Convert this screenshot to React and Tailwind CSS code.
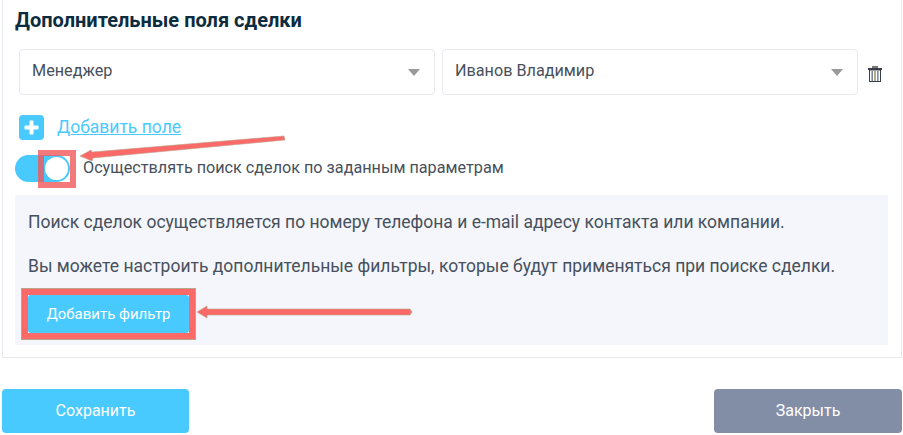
import React from "react";

const Caret = () => (
  <span className="w-0 h-0 border-x-[6px] border-x-transparent border-t-[7px] border-t-[#9a9a9a]"></span>
);

const Select = ({ label }) => (
  <div className="flex-1 h-[46px] flex items-center justify-between pl-[12px] pr-[14px] border border-[#e9e9f0] rounded-[4px] text-[16.2px] text-[#47505c]">
    <span className="-mt-[2px]">{label}</span>
    <Caret />
  </div>
);

const Trash = () => (
  <svg width="14" height="16" viewBox="0 0 14 16" className="shrink-0">
    <rect x="4" y="0" width="6" height="2" fill="#777" />
    <rect x="0" y="2" width="14" height="2" fill="#3a3f47" />
    <rect x="1.5" y="4" width="11" height="11.5" fill="#fff" stroke="#3a3f47" strokeWidth="1" />
    <rect x="3.4" y="5" width="1.6" height="10" fill="#7a8794" />
    <rect x="6.2" y="5" width="1.6" height="10" fill="#a09a70" />
    <rect x="9" y="5" width="1.6" height="10" fill="#7a8fa6" />
  </svg>
);

const App = () => {
  return (
    <div className="relative w-[903px] h-[435px] bg-white overflow-hidden font-['Roboto',sans-serif]">
      {/* Card */}
      <div className="ml-[2px] mr-px h-[358px] border-x border-b border-[#e8e9f0] pl-[12px] pr-[13px] pt-[9px]">
        <h2 className="text-[20px] leading-[22px] font-bold text-[#0d2c3e]">
          Дополнительные поля сделки
        </h2>

        <div className="flex items-center mt-[18px] ml-[4px]">
          <div className="flex gap-[7px] w-[839px]">
            <Select label="Менеджер" />
            <Select label="Иванов Владимир" />
          </div>
          <span className="ml-[10px] mt-[4px]">
            <Trash />
          </span>
        </div>

        <div className="flex items-center mt-[20px] ml-[4px]">
          <span className="w-[25px] h-[25px] rounded-[4px] bg-[#49caff] flex items-center justify-center">
            <svg width="15" height="15" viewBox="0 0 15 15">
              <path
                d="M5.5 1.5a1 1 0 0 1 1-1h2a1 1 0 0 1 1 1v4h4a1 1 0 0 1 1 1v2a1 1 0 0 1-1 1h-4v4a1 1 0 0 1-1 1h-2a1 1 0 0 1-1-1v-4h-4a1 1 0 0 1-1-1v-2a1 1 0 0 1 1-1h4z"
                fill="#fff"
              />
            </svg>
          </span>
          <a className="ml-[13px] text-[17.5px] leading-[25px] text-[#49caff] underline">
            Добавить поле
          </a>
        </div>

        <div className="flex items-center mt-[15px] h-[27px]">
          <div className="relative w-[55px] h-[27px] rounded-full bg-[#49caff]">
            <span className="absolute right-[2px] top-[2px] w-[23px] h-[23px] rounded-full bg-white"></span>
          </div>
          <span className="ml-[13px] text-[16.2px] text-[#47505c]">
            Осуществлять поиск сделок по заданным параметрам
          </span>
        </div>

        <div className="mt-[13px] h-[150px] bg-[#f4f6fb] pl-[7px] pt-[16px] text-[17.5px] leading-[22px] text-[#47505c]">
          <p className="pl-[6px]">
            Поиск сделок осуществляется по номеру телефона и e-mail адресу контакта или компании.
          </p>
          <p className="pl-[6px] mt-[22px]">
            Вы можете настроить дополнительные фильтры, которые будут применяться при поиске сделки.
          </p>
          <div className="mt-[12px] w-[173px] h-[50px] border-[6px] border-[#fb6a68] outline outline-[#b9a58c]">
            <button className="block w-full h-full rounded-[3px] bg-[#49caff] text-white text-[15px]">
              Добавить фильтр
            </button>
          </div>
        </div>
      </div>

      {/* Footer buttons */}
      <div className="flex justify-between mt-[31px] ml-[2px] mr-px">
        <button className="w-[187px] h-[44px] rounded-[4px] bg-[#49caff] text-white text-[16px]">
          Сохранить
        </button>
        <button className="w-[188px] h-[44px] rounded-[4px] bg-[#828da6] text-white text-[16px]">
          Закрыть
        </button>
      </div>

      {/* Screenshot annotations */}
      <div className="absolute left-[38px] top-[150px] w-[38px] h-[38px] border-[6px] border-[#f0585a]/80"></div>
      <svg width="215" height="30" className="absolute left-[76px] top-[132px]">
        <polygon
          points="4,24 15,18 16,20 208,4 209,8 17,26 16,29"
          fill="#fb6a68"
          stroke="#b9a58c"
          strokeWidth="0.6"
        />
      </svg>
      <svg width="222" height="16" className="absolute left-[194px] top-[304px]">
        <polygon
          points="3,8 13,2 13,5 216,5 218,8 216,11 13,11 13,14"
          fill="#fb6a68"
          stroke="#b9a58c"
          strokeWidth="0.6"
        />
      </svg>
    </div>
  );
};

export default App;
